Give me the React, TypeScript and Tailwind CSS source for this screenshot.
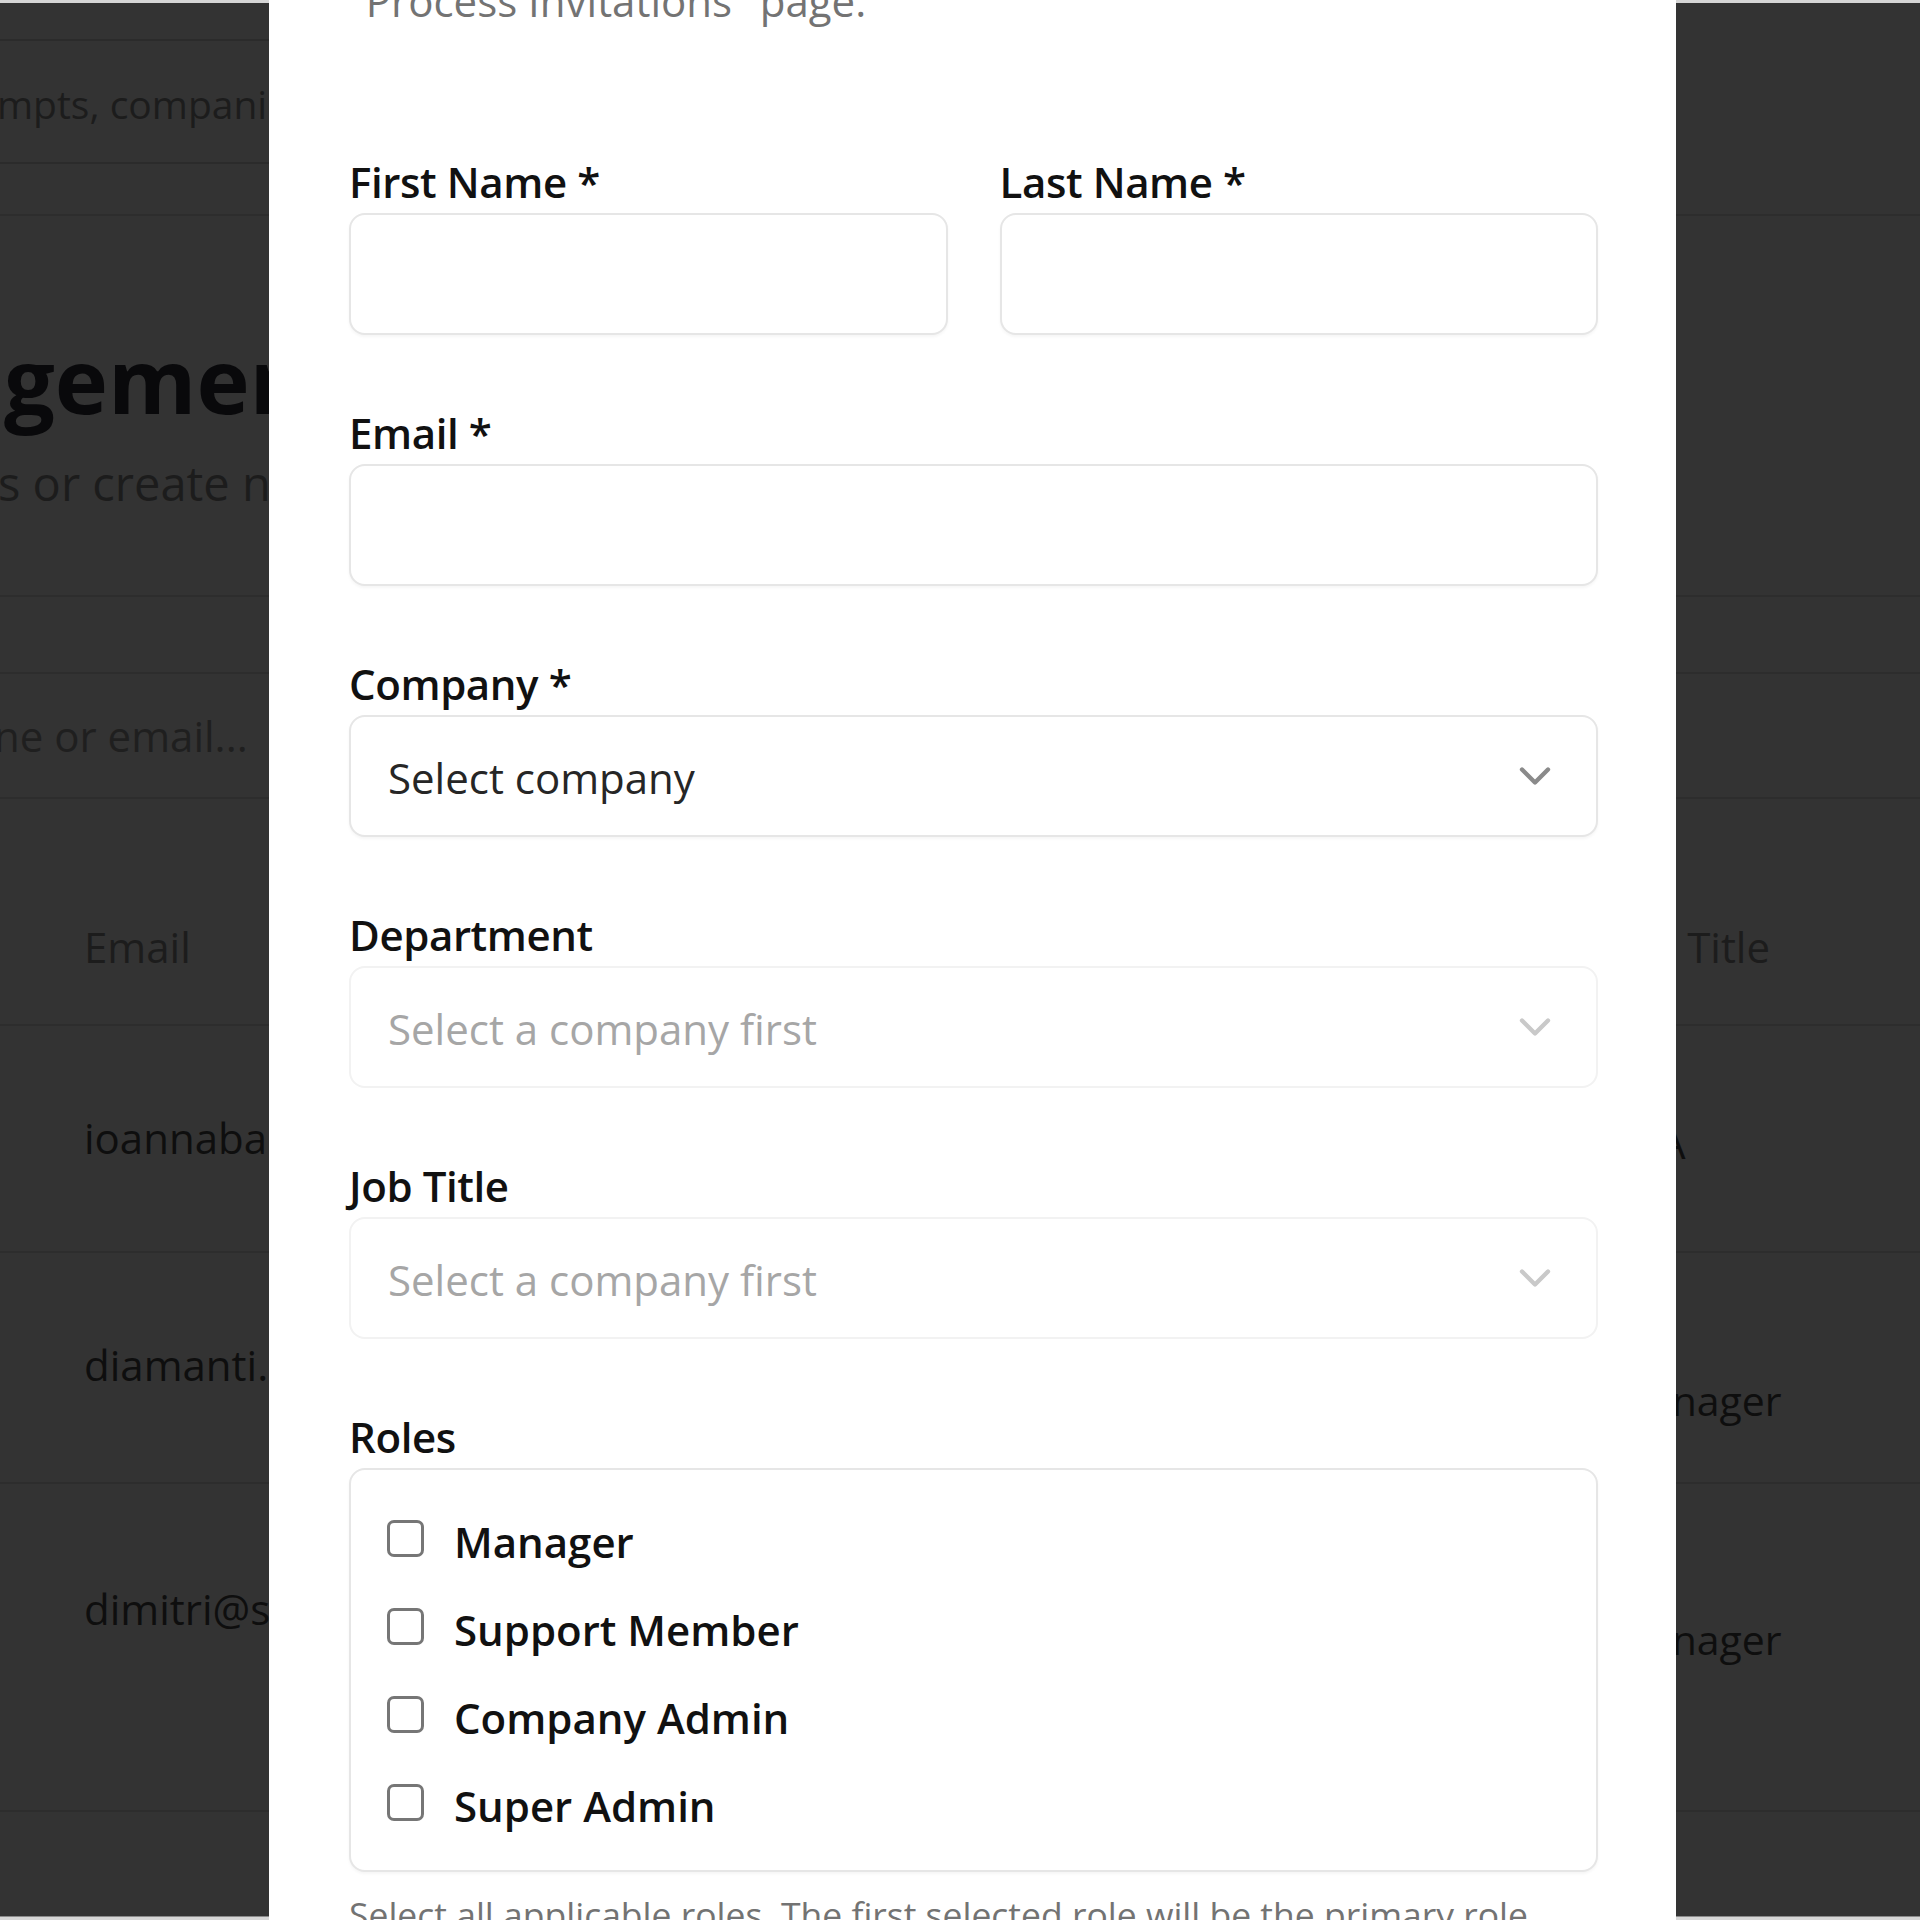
import { ChevronDown } from "lucide-react";

function Field({ label, children }: { label: string; children: React.ReactNode }) {
  return (
    <div className="flex flex-col gap-[10px]">
      <label className="h-[42px] text-[42px] leading-[42px] font-semibold tracking-[-0.4px] text-[#111111]">{label}</label>
      {children}
    </div>
  );
}

function TextInput() {
  return (
    <div className="h-[122px] rounded-[16px] border-2 border-[#e6e6e6] bg-white shadow-[0_2px_3px_rgba(0,0,0,0.04)]" />
  );
}

function SelectBox({ text, disabled }: { text: string; disabled?: boolean }) {
  return (
    <div
      className={
        disabled
          ? "h-[122px] rounded-[16px] border-2 border-[#f2f2f2] bg-white flex items-center justify-between pl-[37px] pr-[35px]"
          : "h-[122px] rounded-[16px] border-2 border-[#e6e6e6] bg-white shadow-[0_2px_3px_rgba(0,0,0,0.04)] flex items-center justify-between pl-[37px] pr-[35px]"
      }
    >
      <span
        className={
          disabled
            ? "pt-[4px] text-[42px] leading-[56px] text-[#a6a6a6]"
            : "pt-[4px] text-[42px] leading-[56px] text-[#262626]"
        }
      >
        {text}
      </span>
      <ChevronDown
        size={52}
        strokeWidth={2}
        className={disabled ? "text-[#c9c9c9]" : "text-[#8a8a8a]"}
      />
    </div>
  );
}

function RoleRow({ label }: { label: string }) {
  return (
    <div className="flex h-[64px] items-center gap-[30px]">
      <span className="block h-[37px] w-[37px] rounded-[7px] border-[3px] border-[#767676] bg-white" />
      <span className="pt-[8px] text-[42px] leading-[56px] font-semibold text-[#111111]">{label}</span>
    </div>
  );
}

export default function App() {
  return (
    <div className="relative h-[1920px] w-[1920px] overflow-hidden bg-[#d6d6d6] font-['Open_Sans','Noto_Sans',sans-serif]">
      {/* Background page under dark overlay */}
      <div className="mt-[3px] flex h-[1914px] flex-col overflow-hidden border-b border-[#8a8a8a] bg-[#333333]">
        <div className="h-[38px] w-[1000px] shrink-0 border-b-2 border-[#2b2b2b]" />
        <div className="h-[123px] w-[1000px] shrink-0 border-b-2 border-[#2b2b2b] pt-[35px]">
          <p className="ml-[-3px] whitespace-nowrap text-[39px] leading-[56px] text-[#1c1c1c]">
            mpts, companies, and departments
          </p>
        </div>
        <div className="h-[52px] shrink-0 border-b-2 border-[#2d2d2d]" />
        <div className="h-[381px] shrink-0 border-b-2 border-[#2d2d2d] pt-[113px]">
          <h1 className="ml-[4px] whitespace-nowrap text-[90px] leading-[100px] font-bold text-[#09090b]">
            gement
          </h1>
          <p className="mt-[22px] ml-[-2px] whitespace-nowrap text-[47px] leading-[64px] text-[#1c1c1c]">
            s or create new users
          </p>
        </div>
        <div className="h-[77px] shrink-0 border-b-2 border-[#2d2d2d]" />
        <div className="h-[125px] shrink-0 border-b-2 border-[#2d2d2d] pt-[34px]">
          <p className="ml-[-6px] whitespace-nowrap text-[42px] leading-[56px] text-[#1f1f1f]">ne or email...</p>
        </div>
        <div className="flex h-[227px] shrink-0 border-b-2 border-[#2d2d2d]">
          <div className="w-[1612px] shrink-0 pl-[84px] pt-[120px]">
            <p className="text-[42px] leading-[56px] font-medium text-[#1c1c1c]">Email</p>
          </div>
          <div className="pt-[120px]">
            <p className="ml-[2px] whitespace-nowrap text-[42px] leading-[56px] font-medium text-[#1c1c1c]">Job Title</p>
          </div>
        </div>
        <div className="flex h-[227px] shrink-0 border-b-2 border-[#2d2d2d]">
          <div className="w-[1612px] shrink-0 pl-[84px] pt-[84px]">
            <p className="text-[42px] leading-[56px] text-[#0e0e0e]">ioannabarbara@example.com</p>
          </div>
          <div className="pt-[89px]">
            <p className="whitespace-nowrap text-[42px] leading-[56px] text-[#0e0e0e]">N/A</p>
          </div>
        </div>
        <div className="flex h-[231px] shrink-0 border-b-2 border-[#2d2d2d]">
          <div className="w-[1612px] shrink-0 pl-[84px] pt-[84px]">
            <p className="text-[42px] leading-[56px] text-[#0e0e0e]">diamanti.c@example.com</p>
          </div>
          <div className="pt-[119px]">
            <p className="whitespace-nowrap text-[41px] leading-[56px] text-[#0e0e0e]">Manager</p>
          </div>
        </div>
        <div className="flex h-[328px] shrink-0 border-b-2 border-[#2d2d2d]">
          <div className="w-[1612px] shrink-0 pl-[84px] pt-[97px]">
            <p className="text-[42px] leading-[56px] text-[#0e0e0e]">dimitri@support.com</p>
          </div>
          <div className="pt-[127px]">
            <p className="whitespace-nowrap text-[41px] leading-[56px] text-[#0e0e0e]">Manager</p>
          </div>
        </div>
        <div className="grow" />
      </div>

      {/* Dialog panel */}
      <div className="absolute left-[269px] top-0 h-[1920px] w-[1407px] overflow-hidden bg-white pl-[80px] pr-[78px]">
        <p className="mt-[-27px] whitespace-nowrap text-[42px] leading-[56px] text-[#737373]">
          "Process Invitations" page.
        </p>
        <div className="mt-[132px] flex flex-col gap-[77px]">
          <div className="grid grid-cols-2 gap-[52px]">
            <Field label="First Name *">
              <TextInput />
            </Field>
            <Field label="Last Name *">
              <TextInput />
            </Field>
          </div>
          <Field label="Email *">
            <TextInput />
          </Field>
          <Field label="Company *">
            <SelectBox text="Select company" />
          </Field>
          <Field label="Department">
            <SelectBox text="Select a company first" disabled />
          </Field>
          <Field label="Job Title">
            <SelectBox text="Select a company first" disabled />
          </Field>
          <div className="flex flex-col">
            <Field label="Roles">
              <div className="flex flex-col gap-[24px] rounded-[16px] border-2 border-[#e6e6e6] bg-white p-[36px] shadow-[0_2px_3px_rgba(0,0,0,0.04)]">
                <RoleRow label="Manager" />
                <RoleRow label="Support Member" />
                <RoleRow label="Company Admin" />
                <RoleRow label="Super Admin" />
              </div>
            </Field>
            <p className="mt-[18px] whitespace-nowrap text-[35.5px] leading-[48px] text-[#737373]">
              Select all applicable roles. The first selected role will be the primary role.
            </p>
          </div>
        </div>
      </div>
    </div>
  );
}
